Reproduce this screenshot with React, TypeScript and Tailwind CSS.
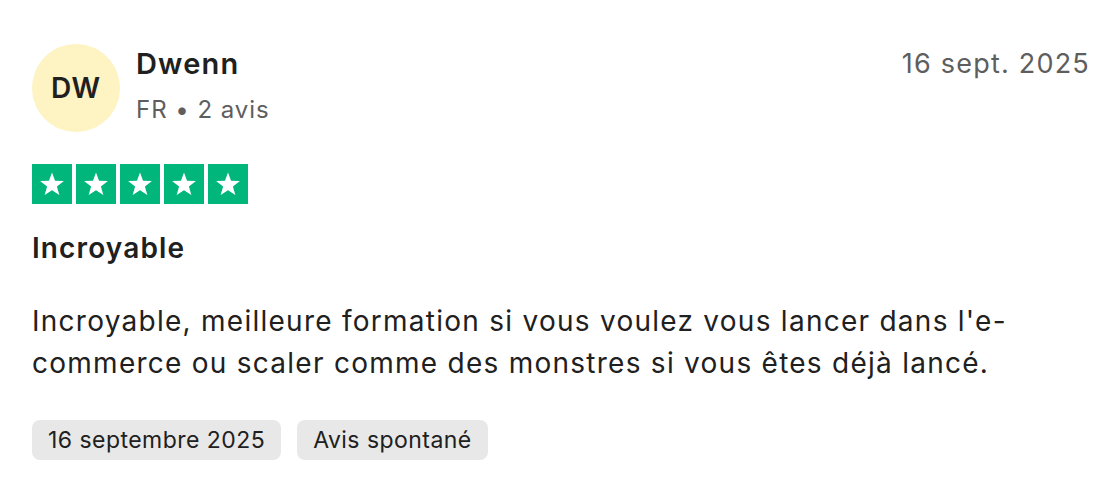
function Star() {
  return (
    <svg viewBox="0 0 24 24" className="h-[28px] w-[28px]">
      <path
        d="M12 2.2l2.6 7.1 7.6.2-6 4.7 2.1 7.3L12 17.3 5.7 21.5l2.1-7.3-6-4.7 7.6-.2z"
        fill="#ffffff"
      />
    </svg>
  );
}

export default function App() {
  return (
    <div
      className="min-h-[492px] w-[1112px] bg-white pl-8 pr-[22px] pt-11 text-[#202020]"
      style={{ fontFamily: "Inter, 'Noto Sans', sans-serif" }}
    >
      <div className="flex items-start justify-between">
        <div className="flex gap-4">
          <div className="flex h-[88px] w-[88px] items-center justify-center rounded-full bg-[#fdf3c3] text-[28px] font-semibold tracking-[0.03em]">
            DW
          </div>
          <div className="flex flex-col">
            <span className="text-[29px] font-semibold leading-[40px] tracking-[0.04em]">Dwenn</span>
            <span className="mt-2 text-[24px] leading-[36px] tracking-[0.04em] text-[#5e5e5e]">FR • 2 avis</span>
          </div>
        </div>
        <span className="text-[27px] leading-[40px] tracking-[0.045em] text-[#5e5e5e]">16 sept. 2025</span>
      </div>

      <div className="mt-8 flex gap-1">
        {[0, 1, 2, 3, 4].map((i) => (
          <div key={i} className="flex h-10 w-10 items-center justify-center bg-[#00b67a]">
            <Star />
          </div>
        ))}
      </div>

      <h2 className="mt-6 text-[28px] font-semibold leading-[40px] tracking-[0.04em]">Incroyable</h2>

      <p className="mt-8 text-[28px] leading-[42px] tracking-[0.045em]">
        Incroyable, meilleure formation si vous voulez vous lancer dans l'e-commerce ou scaler comme des monstres si vous êtes déjà lancé.
      </p>

      <div className="mt-9 flex gap-4">
        <span className="flex h-10 items-center rounded-lg bg-[#e8e8e8] px-4 text-[23px] tracking-[0.02em]">16 septembre 2025</span>
        <span className="flex h-10 items-center rounded-lg bg-[#e8e8e8] px-4 text-[23px] tracking-[0.02em]">Avis spontané</span>
      </div>
    </div>
  );
}
